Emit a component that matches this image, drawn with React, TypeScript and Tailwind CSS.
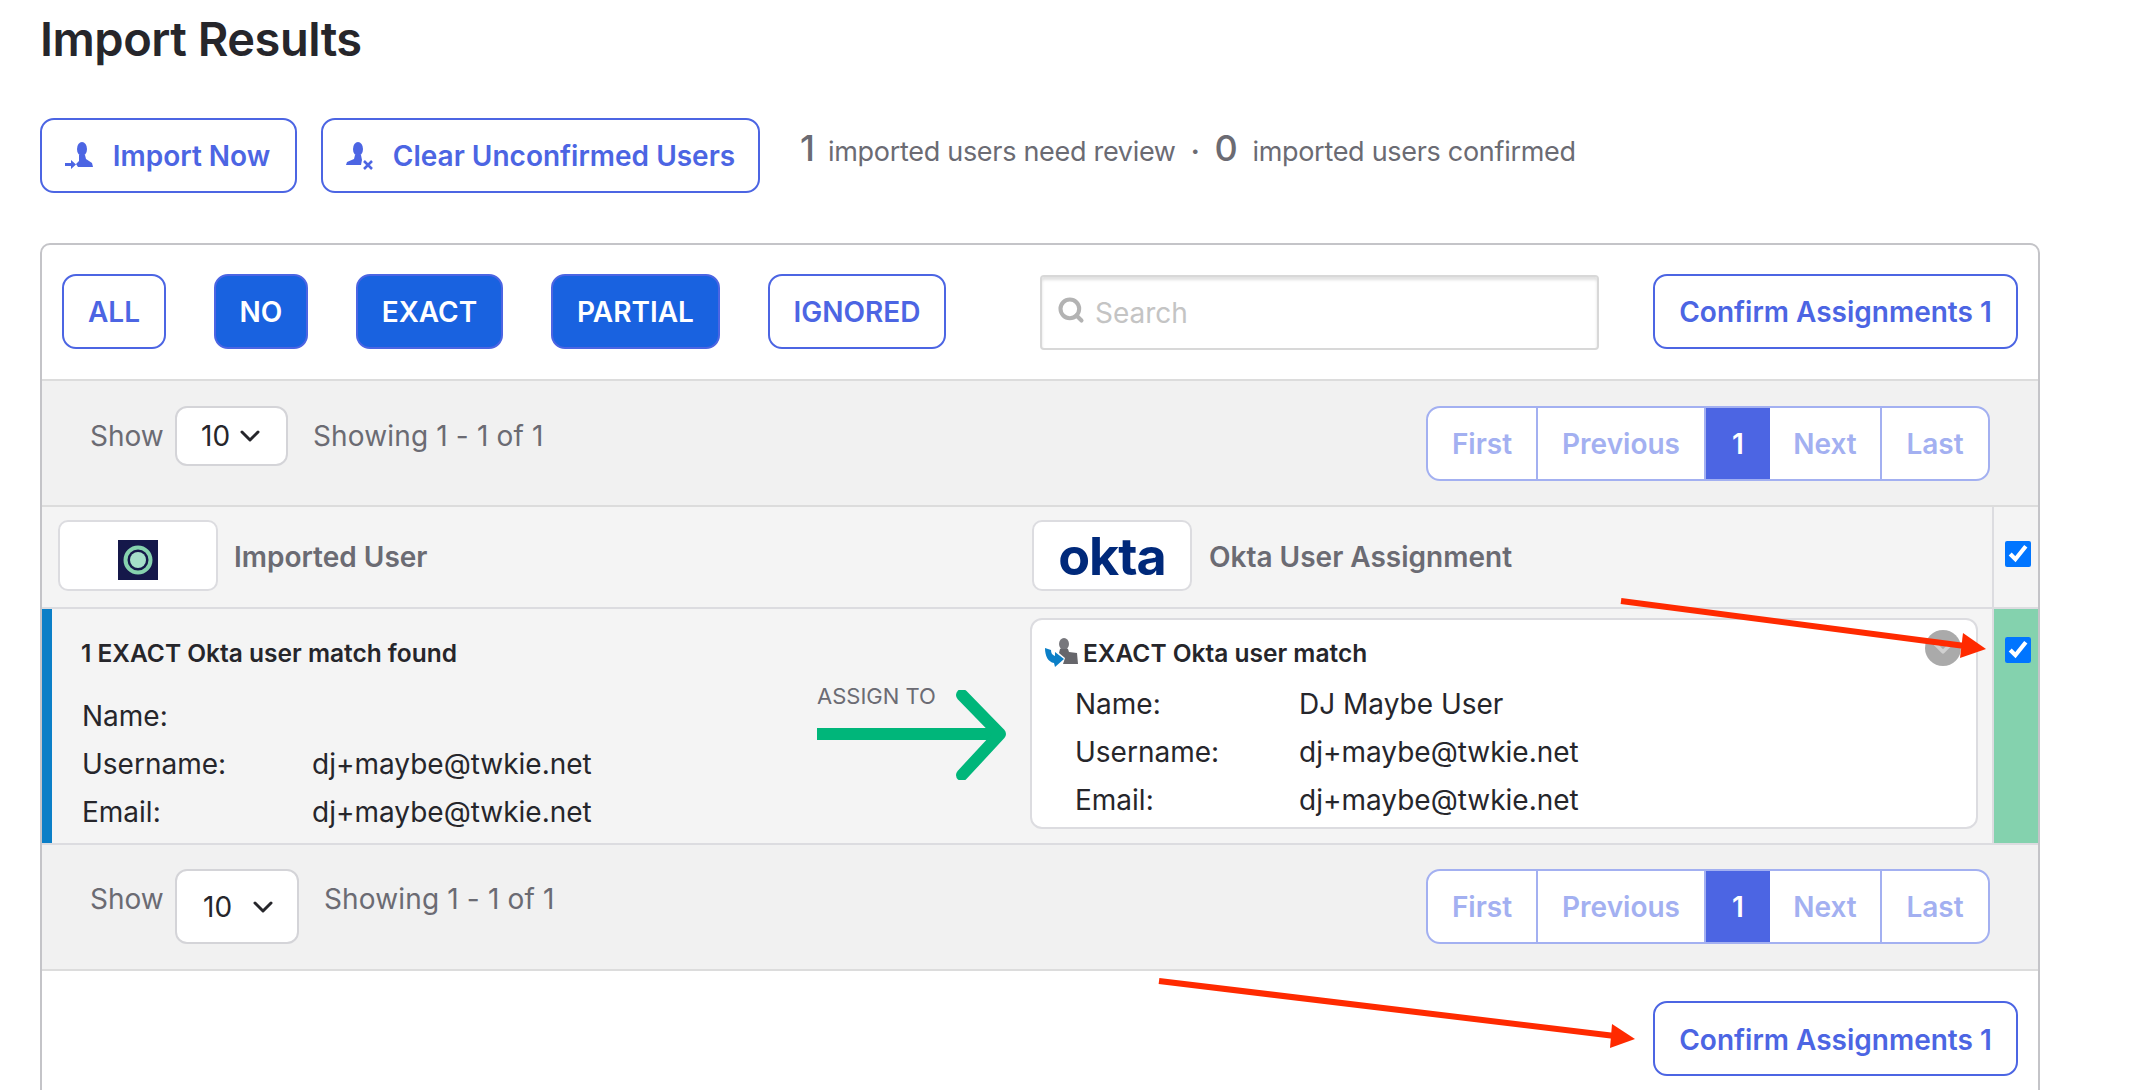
import { ChevronDown, Search } from 'lucide-react'

const outline = 'h-[75px] flex items-center justify-center rounded-[14px] border-2 border-[#4c65e3] bg-white text-[#4c65e3] text-[28px] font-semibold'
const filled = 'h-[75px] flex items-center justify-center rounded-[14px] border-2 border-[#4c65e3] bg-[#1962e0] text-white text-[28px] font-semibold'

function ImportIcon() {
  return (
    <svg width="28" height="28" viewBox="0 0 28 28" fill="#4c65e3">
      <ellipse cx="17" cy="7" rx="5" ry="7" />
      <path d="M14 13h6l1 4 6 4 1 4H13l-2-3 3-3z" />
      <path d="M0 21h6v-3l5 4.500-5 4.500v-3H0z" />
    </svg>
  )
}

function ClearIcon() {
  return (
    <svg width="28" height="28" viewBox="0 0 28 28" fill="#4c65e3">
      <ellipse cx="12" cy="7" rx="5" ry="7" />
      <path d="M9 13h6l1 5-1 5H0l1-3 7-3z" />
      <path d="M18 19l8 8M26 19l-8 8" stroke="#4c65e3" strokeWidth="2.500" fill="none" />
    </svg>
  )
}

function MatchIcon() {
  return (
    <svg width="33" height="30" viewBox="0 0 33 30" className="shrink-0">
      <ellipse cx="19" cy="6" rx="5" ry="6" fill="#77777c" />
      <path d="M15 11h8l1 3 8 1 1 11H18l2-6-6-5z" fill="#66666b" />
      <path d="M0 10l6 2c0 3 1 5 4 6v-4l9 7-9 8-1-4C3 24 0 18 0 10z" fill="#0b7fc7" />
    </svg>
  )
}

function Pagination() {
  const cell = 'h-full flex items-center justify-center text-[#a3b0f1] border-r-2 border-[#a3b0f1]'
  return (
    <div className="flex h-[75px] w-[564px] rounded-[14px] border-2 border-[#a3b0f1] bg-white text-[28px] font-semibold overflow-hidden">
      <div className={cell + ' w-[110px]'}>First</div>
      <div className={cell + ' w-[168px] border-r-0'}>Previous</div>
      <div className="h-full w-[64px] flex items-center justify-center bg-[#4c65e3] text-white">1</div>
      <div className={cell + ' w-[112px]'}>Next</div>
      <div className="h-full flex-1 flex items-center justify-center text-[#a3b0f1]">Last</div>
    </div>
  )
}

function PageBar({ selectClass, gap, pad, height, textTop }: { selectClass: string; gap: string; pad: string; height: string; textTop: string }) {
  return (
    <div className={`flex justify-between items-start pl-[48px] pr-[48px] bg-[#f1f1f1] border-b-2 border-[#dcdcdc] ${pad} ${height}`}>
      <div className="flex items-start text-[28px] text-[#6b6b73]">
        <span className="w-[85px] leading-[40px] mt-[10px]">Show</span>
        <div className={`flex items-center justify-between bg-white rounded-[12px] border-2 border-[#d4d4d8] text-[#26262b] ${selectClass}`}>
          <span>10</span>
          <ChevronDown size={32} strokeWidth={2.250} />
        </div>
        <span className={`${gap} ${textTop} leading-[40px] tracking-[0.15px]`}>Showing 1 - 1 of 1</span>
      </div>
      <Pagination />
    </div>
  )
}

export default function App() {
  return (
    <div className="relative w-[2130px] h-[1090px] overflow-hidden bg-white px-10 font-['Inter',sans-serif]">
      <h1 className="h-[78px] leading-[78px] text-[47px] font-semibold text-[#26262b] tracking-[-0.5px]">Import Results</h1>

      <div className="mt-[40px] flex items-center h-[75px]">
        <button className={outline + ' w-[257px] gap-[20px] pr-[2px]'}>
          <ImportIcon />
          Import Now
        </button>
        <button className={outline + ' w-[439px] ml-[24px] gap-[19px]'}>
          <ClearIcon />
          Clear Unconfirmed Users
        </button>
        <div className="ml-[40px] flex items-baseline text-[#6b6b73] text-[27px] tracking-[-0.3px] -mt-[16px]">
          <span className="text-[36px] font-medium w-[28px]">1</span>
          <span>imported users need review</span>
          <span className="mx-[15px] font-bold">·</span>
          <span className="text-[36px] font-medium w-[38px]">0</span>
          <span>imported users confirmed</span>
        </div>
      </div>

      <div className="mt-[50px] w-[2000px] h-[900px] rounded-[10px] border-2 border-[#c4c4c8] bg-white overflow-hidden">
        {/* barre de filtres */}
        <div className="h-[136px] flex items-center pl-[20px] pr-[20px] border-b-2 border-[#dcdcdc] pb-[2px]">
          <div className="flex items-center gap-[48px]">
            <button className={outline + ' w-[104px] pt-[2px]'}>ALL</button>
            <button className={filled + ' w-[94px] pt-[2px]'}>NO</button>
            <button className={filled + ' w-[147px] pt-[2px]'}>EXACT</button>
            <button className={filled + ' w-[169px] pt-[2px]'}>PARTIAL</button>
            <button className={outline + ' w-[178px] pt-[2px]'}>IGNORED</button>
          </div>
          <div className="ml-[94px] w-[559px] h-[75px] mt-[3px] flex items-center pl-[15px] gap-[10px] rounded-[4px] border-2 border-[#d8d8d8] shadow-[inset_0_3px_3px_rgba(0,0,0,0.12)]">
            <Search size={28} strokeWidth={3.500} className="text-[#b3b3b3] -mt-[6px]" />
            <input placeholder="Search" className="flex-1 outline-none bg-transparent text-[28px] placeholder:text-[#c4c4c4]" />
          </div>
          <button className={outline + ' w-[365px] ml-[54px] pt-[2px]'}>Confirm Assignments 1</button>
        </div>

        <PageBar selectClass="w-[113px] h-[60px] pl-[24px] pr-[20px] text-[28px]" gap="ml-[25px]" pad="pt-[25px]" height="h-[126px]" textTop="mt-[10px]" />

        {/* en-tete des colonnes */}
        <div className="h-[102px] flex bg-[#f4f4f4] border-b-2 border-[#dcdce0]">
          <div className="flex items-center pl-[16px] w-[1150px]">
            <div className="-mt-[4px] w-[160px] h-[71px] flex items-center justify-center bg-white rounded-[10px] border-2 border-[#dcdce0]">
              <svg width="40" height="40" viewBox="0 0 40 40" className="mt-[9px]">
                <rect width="40" height="40" fill="#15184a" />
                <circle cx="20" cy="20" r="12.500" fill="none" stroke="#86d2ae" strokeWidth="4" />
                <circle cx="20" cy="20" r="8" fill="#a5dfc9" />
              </svg>
            </div>
            <span className="ml-[16px] text-[28px] font-semibold text-[#6b6b73]">Imported User</span>
            <div className="-mt-[4px] ml-[auto] w-[160px] h-[71px] flex items-center justify-center bg-white rounded-[10px] border-2 border-[#dcdce0]">
              <span className="text-[52px] leading-none font-bold text-[#00297a] tracking-[-1px] mt-[3px]">okta</span>
            </div>
          </div>
          <div className="flex-1 flex items-center pl-[17px] border-r-2 border-[#dcdce0]">
            <span className="text-[28px] font-semibold text-[#6b6b73]">Okta User Assignment</span>
          </div>
          <div className="w-[44px] flex items-start justify-center pt-[34px] pl-[4px]">
            <input type="checkbox" defaultChecked className="w-[26px] h-[26px] accent-[#0075ff]" />
          </div>
        </div>

        {/* ligne resultat */}
        <div className="h-[236px] flex bg-[#f4f4f4] border-b-2 border-[#dcdce0]">
          <div className="w-[775px] border-l-[10px] border-[#0b7fc7] pl-[30px] pt-[24px] text-[#26262b] text-[28px]">
            <div className="h-[40px] leading-[40px] text-[24.500px] font-semibold -ml-[1px]">1 EXACT Okta user match found</div>
            <div className="mt-[19px] flex h-[48px] items-center"><span className="w-[230px]">Name:</span></div>
            <div className="flex h-[48px] items-center"><span className="w-[230px]">Username:</span>dj+maybe@twkie.net</div>
            <div className="flex h-[48px] items-center"><span className="w-[230px]">Email:</span>dj+maybe@twkie.net</div>
          </div>

          <div className="w-[213px] pt-[71px]">
            <div className="h-[32px] leading-[32px] text-[22px] text-[#6b6b73]">ASSIGN TO</div>
            <svg width="190" height="90" viewBox="0 0 190 90" className="-mt-[22px]">
              <path d="M0 44h182" stroke="#00b67a" strokeWidth="12" fill="none" />
              <path d="M145 5l38 39-38 41" stroke="#00b67a" strokeWidth="12" strokeLinecap="round" strokeLinejoin="round" fill="none" />
            </svg>
          </div>

          <div className="relative mt-[9px] w-[948px] h-[211px] rounded-[12px] border-2 border-[#dcdce0] bg-white pl-[10px] pt-[13px] text-[#26262b] text-[28px]">
            <div className="h-[40px] flex items-center gap-[5px] pl-[3px]">
              <MatchIcon />
              <span className="text-[24.500px] font-semibold">EXACT Okta user match</span>
            </div>
            <div className="mt-[7px] pl-[33px]">
              <div className="flex h-[48px] items-center"><span className="w-[224px]">Name:</span>DJ Maybe User</div>
              <div className="flex h-[48px] items-center"><span className="w-[224px]">Username:</span>dj+maybe@twkie.net</div>
              <div className="flex h-[48px] items-center"><span className="w-[224px]">Email:</span>dj+maybe@twkie.net</div>
            </div>
            <div className="absolute left-[893px] top-[10px] w-[36px] h-[36px] rounded-full bg-[#aaaaaa] flex items-center justify-center">
              <ChevronDown size={30} strokeWidth={3} className="text-[#d0d0d0]" />
            </div>
          </div>

          <div className="ml-[14px] flex-1 flex items-start justify-center pt-[28px] pl-[4px] bg-[#84d2ae] border-l-2 border-[#dcdce0]">
            <input type="checkbox" defaultChecked className="w-[26px] h-[26px] accent-[#0075ff]" />
          </div>
        </div>

        <PageBar selectClass="w-[124px] h-[75px] pl-[26px] pr-[18px] text-[28px]" gap="ml-[25px]" pad="pt-[24px]" height="h-[126px]" textTop="mt-[10px]" />

        <div className="flex justify-end pt-[30px] pr-[20px]">
          <button className={outline + ' w-[365px] pt-[2px]'}>Confirm Assignments 1</button>
        </div>
      </div>

      {/* fleches d'annotation */}
      <svg className="absolute left-0 top-0 pointer-events-none" width="2130" height="1090" viewBox="0 0 2130 1090">
        <path d="M1621 601L1965 646" stroke="#ff2a00" strokeWidth="6" fill="none" />
        <path d="M1986 649L1963 633L1960 658z" fill="#ff2a00" />
        <path d="M1159 981L1615 1036" stroke="#ff2a00" strokeWidth="6" fill="none" />
        <path d="M1635 1039L1612 1024L1610 1048z" fill="#ff2a00" />
      </svg>
    </div>
  )
}
